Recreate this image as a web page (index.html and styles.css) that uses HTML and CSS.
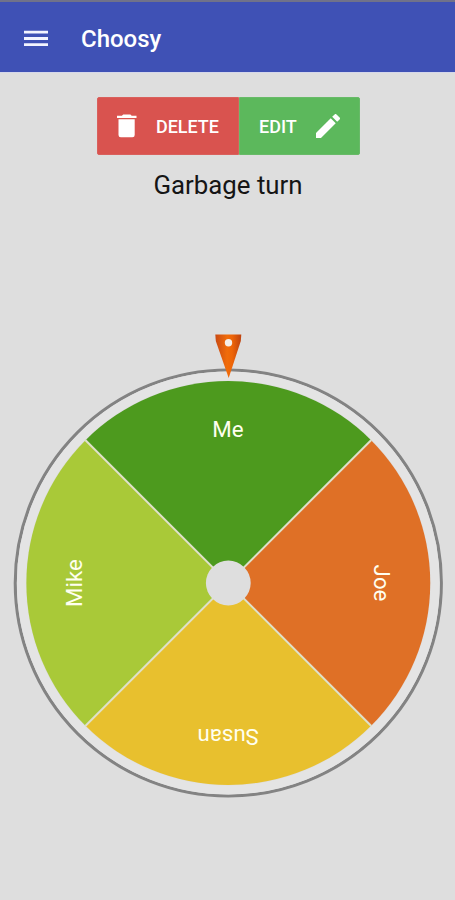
FILE: index.html
```html
<!DOCTYPE html>
<html lang="en">
<head>
<meta charset="utf-8">
<title>Choosy</title>
<link rel="stylesheet" href="styles.css">
</head>
<body>
<header class="app-bar">
  <svg class="menu-icon" width="24" height="18" viewBox="0 0 24 18" aria-hidden="true">
    <path d="M0 0.8h24v2.8H0zM0 7.1h24v2.8H0zM0 13.3h24v2.8H0z"/>
  </svg>
  <h1 class="app-title">Choosy</h1>
</header>
<main class="content">
  <div class="actions">
    <button class="btn btn-delete">
      <svg class="trash-icon" width="20" height="24" viewBox="0 0 20 24" aria-hidden="true">
        <path d="M6.2 0.5h7.2l1.3 1.2h4.8v2.4H0V1.7h4.9zM1.5 5.3h16.2v15.6q0 2.3-2.3 2.3H3.8q-2.3 0-2.3-2.3z"/>
      </svg>
      <span>DELETE</span>
    </button>
    <button class="btn btn-edit">
      <span>EDIT</span>
      <svg class="pencil-icon" width="24" height="24" viewBox="3 3 18 18" aria-hidden="true">
        <path d="M3 17.25V21h3.75L17.81 9.94l-3.75-3.75L3 17.25zM20.71 7.04a1 1 0 0 0 0-1.41l-2.34-2.34a1 1 0 0 0-1.41 0l-1.83 1.83 3.75 3.75 1.83-1.83z"/>
      </svg>
    </button>
  </div>
  <h2 class="list-title">Garbage turn</h2>
  <svg class="wheel" width="455" height="480" viewBox="0 325 455 480">
    <defs>
      <linearGradient id="pointer" x1="0" x2="1" y1="0" y2="0">
        <stop offset="0" stop-color="#c94a14"/>
        <stop offset="0.45" stop-color="#f06c0a"/>
        <stop offset="0.65" stop-color="#ee6508"/>
        <stop offset="1" stop-color="#bd420f"/>
      </linearGradient>
    </defs>
    <g transform="translate(228.3 583)">
      <circle class="ring" r="213"/>
      <circle class="rim" r="207"/>
      <g class="slices">
        <path class="green" d="M0 0L-142.8-142.8A202 202 0 0 1 142.8-142.8z"/>
        <path class="orange" d="M0 0L142.8-142.8A202 202 0 0 1 142.8 142.8z"/>
        <path class="yellow" d="M0 0L142.8 142.8A202 202 0 0 1-142.8 142.8z"/>
        <path class="lime" d="M0 0L-142.8 142.8A202 202 0 0 1-142.8-142.8z"/>
      </g>
      <path class="dividers" d="M-143-143L143 143M143-143L-143 143"/>
      <circle class="hub" r="22.4"/>
      <g class="labels">
        <text x="-0.5" y="-146">Me</text>
        <text y="-145.5" transform="rotate(90)">Joe</text>
        <text y="-145.5" transform="rotate(180)">Susan</text>
        <text y="-146.3" transform="rotate(270)">Mike</text>
      </g>
    </g>
    <path class="pointer" d="M215.3 334.5H241.3L240.8 341L228.7 378L215.8 341z"/>
    <circle class="pin" cx="228.5" cy="342.8" r="3.7"/>
  </svg>
</main>
</body>
</html>
```
FILE: styles.css
```css
* {
  box-sizing: border-box;
}

body {
  margin: 0;
  min-height: 900px;
  background: #dedede;
  font-family: Roboto, "Liberation Sans", sans-serif;
}

.app-bar {
  display: flex;
  align-items: center;
  height: 73px;
  padding: 4px 24px 0;
  border-top: 2px solid #70728a;
  border-bottom: 1px solid #d5d7ea;
  background: #3f51b5;
  color: #fff;
}

.menu-icon {
  fill: #f3f4ff;
}

.app-title {
  margin: 0 0 0 33px;
  font-size: 24px;
  font-weight: 500;
  line-height: 30px;
}

.content {
  display: flex;
  flex-direction: column;
  align-items: center;
  padding-top: 24px;
}

.actions {
  display: flex;
  width: 263px;
  height: 58px;
  margin-left: 2px;
}

.btn {
  display: flex;
  align-items: center;
  justify-content: space-between;
  border: 1px solid;
  color: #fff;
  font: 500 18px/24px Roboto, "Liberation Sans", sans-serif;
}

.btn svg {
  fill: #fff;
}

.btn span {
  padding-top: 2px;
}

.btn-delete {
  width: 142px;
  padding: 0 19px;
  border-color: #d9605c;
  border-radius: 2px 0 0 2px;
  background: #d9534f;
}

.btn-edit {
  width: 121px;
  padding: 0 19px;
  border-color: #68ba68;
  border-radius: 0 2px 2px 0;
  background: #5cb85c;
}

.list-title {
  margin: 14px 0 0 1px;
  color: #151515;
  font-size: 25.8px;
  font-weight: 400;
  line-height: 32px;
}

.wheel {
  display: block;
  margin-top: 124px;
}

.ring {
  fill: none;
  stroke: #838383;
  stroke-width: 3.2;
}

.rim {
  fill: none;
  stroke: #e4e4e4;
  stroke-width: 9;
}

.green { fill: #4d9a1e; }
.orange { fill: #df7026; }
.yellow { fill: #e8c02e; }
.lime { fill: #a9c938; }

.dividers {
  stroke: #dfe0ca;
  stroke-width: 2;
}

.hub {
  fill: #dedede;
}

.labels {
  fill: #fffff0;
  font-size: 22.3px;
  text-anchor: middle;
}

.pointer {
  fill: url(#pointer);
}

.pin {
  fill: #f5eee8;
}
```
